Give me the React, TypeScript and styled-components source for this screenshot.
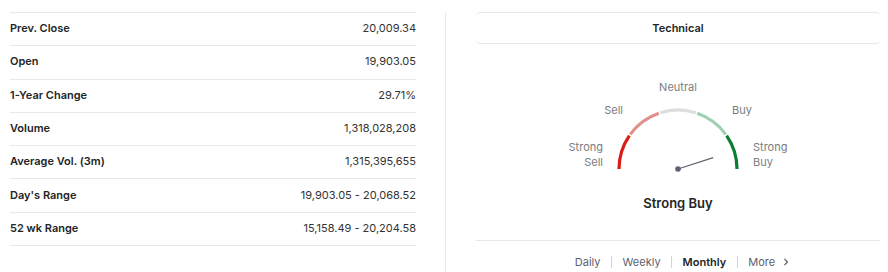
import React from "react";
import styled, { createGlobalStyle } from "styled-components";

const GlobalStyle = createGlobalStyle`
  html, body {
    margin: 0;
    padding: 0;
    background: #ffffff;
    font-family: Inter, "Noto Sans", Arial, sans-serif;
    -webkit-font-smoothing: antialiased;
  }
`;

const Page = styled.div`
  display: flex;
  align-items: stretch;
  width: 888px;
  height: 272px;
  padding: 12px 8px 0 10px;
  box-sizing: border-box;
  overflow: hidden;
`;

const StatsTable = styled.div`
  width: 406px;
  flex: none;
  border-top: 1px solid #e6e9eb;
  align-self: flex-start;
`;

const StatRow = styled.div`
  display: flex;
  align-items: center;
  justify-content: space-between;
  height: 33.3px;
  box-sizing: border-box;
  border-bottom: 1px solid #e6e9eb;
  padding-bottom: 2px;
  font-size: 11px;
`;

const StatLabel = styled.span`
  font-weight: 600;
  color: #232526;
`;

const StatValue = styled.span`
  color: #333333;
`;

const Divider = styled.div`
  width: 1px;
  flex: none;
  background: #e6e9eb;
  margin: 0 30px 0 29px;
`;

const TechPanel = styled.div`
  flex: 1;
  display: flex;
  flex-direction: column;
  align-items: stretch;
  & > * {
    flex-shrink: 0;
  }
`;

const PanelHeader = styled.div`
  height: 32px;
  box-sizing: border-box;
  border: 1px solid #e6e9eb;
  border-left: none;
  border-right: none;
  border-radius: 4px;
  display: flex;
  align-items: center;
  justify-content: center;
  font-size: 11px;
  font-weight: 600;
  color: #232526;
`;

const GaugeArea = styled.div`
  position: relative;
  height: 115px;
  margin-top: 36px;
`;

const GaugeSvg = styled.svg`
  position: absolute;
  left: 139px;
  top: 27px;
`;

const GaugeLabel = styled.span<{ $x: number; $y: number; $align?: "left" | "right" | "center" }>`
  position: absolute;
  left: ${({ $x }) => $x}px;
  top: ${({ $y }) => $y}px;
  transform: ${({ $align }) =>
    $align === "right" ? "translateX(-100%)" : $align === "center" ? "translateX(-50%)" : "none"};
  text-align: ${({ $align }) => $align ?? "left"};
  font-size: 11px;
  line-height: 15px;
  color: #7a7d80;
  white-space: nowrap;
`;

const Verdict = styled.div`
  text-align: center;
  font-size: 13px;
  font-weight: 600;
  color: #232526;
  line-height: 16px;
`;

const Tabs = styled.div`
  margin-top: 29px;
  border-top: 1px solid #e6e9eb;
  display: flex;
  align-items: center;
  justify-content: center;
  padding: 15px 0 0 8px;
  font-size: 11px;
`;

const Tab = styled.span<{ $active?: boolean }>`
  display: flex;
  align-items: center;
  gap: 8px;
  padding: 0 10.5px;
  color: ${({ $active }) => ($active ? "#232526" : "#5b616e")};
  font-weight: ${({ $active }) => ($active ? 600 : 400)};
  line-height: 12px;
  & + & {
    border-left: 1px solid #d3d6d9;
  }
`;

const rows: [string, string][] = [
  ["Prev. Close", "20,009.34"],
  ["Open", "19,903.05"],
  ["1-Year Change", "29.71%"],
  ["Volume", "1,318,028,208"],
  ["Average Vol. (3m)", "1,315,395,655"],
  ["Day's Range", "19,903.05 - 20,068.52"],
  ["52 wk Range", "15,158.49 - 20,204.58"],
];

const R = 59;
const CX = 63;
const CY = 62;

const arc = (fromDeg: number, toDeg: number) => {
  const p = (d: number) => {
    const a = (d * Math.PI) / 180;
    return `${(CX + R * Math.cos(a)).toFixed(2)} ${(CY - R * Math.sin(a)).toFixed(2)}`;
  };
  return `M ${p(fromDeg)} A ${R} ${R} 0 0 1 ${p(toDeg)}`;
};

const segments = [
  { from: 180, to: 145.5, color: "#d91e18" },
  { from: 144, to: 109, color: "#e0918c" },
  { from: 107.5, to: 72.5, color: "#dcdedf" },
  { from: 71, to: 36, color: "#9fd1b2" },
  { from: 34.5, to: 0, color: "#0b7d34" },
];

const Gauge: React.FC<{ needleDeg: number }> = ({ needleDeg }) => {
  const a = (needleDeg * Math.PI) / 180;
  const len = 37;
  return (
    <GaugeSvg width="126" height="66" viewBox="0 0 126 66">
      {segments.map((s) => (
        <path key={s.color} d={arc(s.from, s.to)} stroke={s.color} strokeWidth="3.2" fill="none" />
      ))}
      <line
        x1={CX}
        y1={CY}
        x2={CX + len * Math.cos(a)}
        y2={CY - len * Math.sin(a)}
        stroke="#5b616e"
        strokeWidth="1.2"
      />
      <circle cx={CX} cy={CY} r="2.8" fill="#5b616e" />
    </GaugeSvg>
  );
};

export default function App() {
  return (
    <>
      <GlobalStyle />
      <Page>
        <StatsTable>
          {rows.map(([label, value]) => (
            <StatRow key={label}>
              <StatLabel>{label}</StatLabel>
              <StatValue>{value}</StatValue>
            </StatRow>
          ))}
        </StatsTable>
        <Divider />
        <TechPanel>
          <PanelHeader>Technical</PanelHeader>
          <GaugeArea>
            <GaugeLabel $x={202} $y={0} $align="center">Neutral</GaugeLabel>
            <GaugeLabel $x={147} $y={23} $align="right">Sell</GaugeLabel>
            <GaugeLabel $x={256} $y={23}>Buy</GaugeLabel>
            <GaugeLabel $x={127} $y={60} $align="right">
              Strong
              <br />
              Sell
            </GaugeLabel>
            <GaugeLabel $x={277} $y={60}>
              Strong
              <br />
              Buy
            </GaugeLabel>
            <Gauge needleDeg={18} />
          </GaugeArea>
          <Verdict>Strong Buy</Verdict>
          <Tabs>
            <Tab>Daily</Tab>
            <Tab>Weekly</Tab>
            <Tab $active>Monthly</Tab>
            <Tab>
              More
              <svg width="6" height="8" viewBox="0 0 6 8">
                <path d="M1.5 1 L4.5 4 L1.5 7" stroke="#5b616e" strokeWidth="1.2" fill="none" />
              </svg>
            </Tab>
          </Tabs>
        </TechPanel>
      </Page>
    </>
  );
}
